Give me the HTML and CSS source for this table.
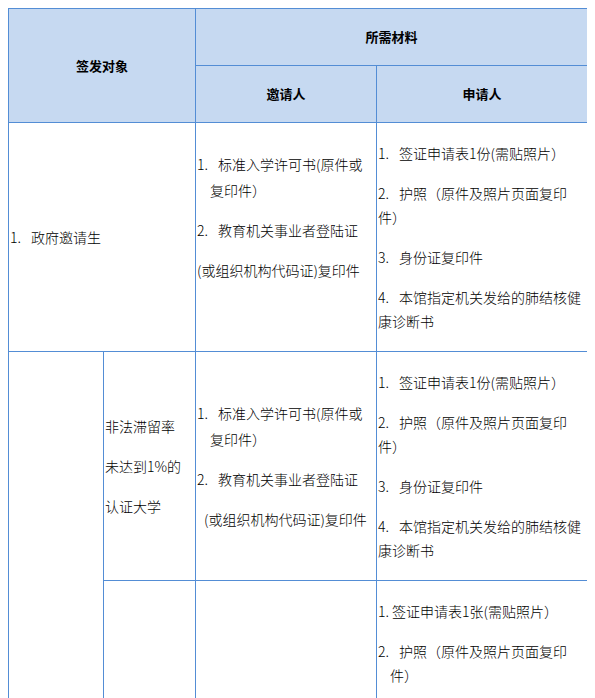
FILE: index.html
```html
<!DOCTYPE html>
<html lang="zh-CN">
<head>
<meta charset="utf-8">
<title>签发对象与所需材料</title>
<link rel="stylesheet" href="styles.css">
</head>
<body>
<table class="visa">
  <colgroup>
    <col class="c-a">
    <col class="c-b">
    <col class="c-c">
    <col class="c-d">
  </colgroup>
  <thead>
    <tr class="h1">
      <th colspan="2" rowspan="2">签发对象</th>
      <th colspan="2">所需材料</th>
    </tr>
    <tr class="h2">
      <th>邀请人</th>
      <th>申请人</th>
    </tr>
  </thead>
  <tbody>
    <tr class="r1">
      <td colspan="2"><span class="n">1.</span>政府邀请生</td>
      <td class="mid">
        <p class="hang"><span class="n">1.</span>标准入学许可书(原件或<br>复印件）</p>
        <p><span class="n">2.</span>教育机关事业者登陆证</p>
        <p>(或组织机构代码证)复印件</p>
        <p>&nbsp;</p>
      </td>
      <td class="app">
        <p><span class="n">1.</span>签证申请表1份(需贴照片）</p>
        <p><span class="n">2.</span>护照（原件及照片页面复印<br>件）</p>
        <p><span class="n">3.</span>身份证复印件</p>
        <p><span class="n">4.</span>本馆指定机关发给的肺结核健<br>康诊断书</p>
      </td>
    </tr>
    <tr class="r2">
      <td rowspan="2"></td>
      <td class="sub">
        <p>非法滞留率</p>
        <p>未达到1%的</p>
        <p>认证大学</p>
      </td>
      <td class="mid">
        <p class="hang"><span class="n">1.</span>标准入学许可书(原件或<br>复印件）</p>
        <p><span class="n">2.</span>教育机关事业者登陆证</p>
        <p class="ind">(或组织机构代码证)复印件</p>
      </td>
      <td class="app">
        <p><span class="n">1.</span>签证申请表1份(需贴照片）</p>
        <p><span class="n">2.</span>护照（原件及照片页面复印<br>件）</p>
        <p><span class="n">3.</span>身份证复印件</p>
        <p><span class="n">4.</span>本馆指定机关发给的肺结核健<br>康诊断书</p>
      </td>
    </tr>
    <tr class="r3">
      <td class="sub"></td>
      <td class="mid"></td>
      <td class="app top">
        <p><span class="n tight">1.</span>签证申请表1张(需贴照片）</p>
        <p class="hang"><span class="n">2.</span>护照（原件及照片页面复印<br>件）</p>
      </td>
    </tr>
  </tbody>
</table>
</body>
</html>
```

FILE: styles.css
```css
html, body {
  background: #ffffff;
}

body {
  margin: 8px;
  font-family: "Noto Sans CJK SC", "Liberation Sans", sans-serif;
  font-size: 14px;
  color: #000000;
}

.visa {
  border-collapse: collapse;
  table-layout: fixed;
  width: 579px;
}

.c-a { width: 95px; }
.c-b { width: 92px; }
.c-c { width: 181px; }
.c-d { width: 211px; }

.visa th,
.visa td {
  border: 1px solid #538dd5;
  padding: 0 1px;
  vertical-align: middle;
  text-align: left;
  line-height: 24px;
  font-weight: 300;
}

.visa th {
  background: #c6d9f1;
  text-align: center;
  font-weight: 700;
  font-size: 13px;
}

.h1 th { height: 56px; }
.h2 th { height: 56px; }

.r1 td,
.r2 td { height: 228px; }

.r3 td { height: 200px; }

.visa p {
  margin: 0;
}

.visa p + p {
  margin-top: 16px;
}

.mid p {
  line-height: 26px;
}

.mid p + p {
  margin-top: 14px;
}

.hang {
  padding-left: 13px;
  text-indent: -13px;
}

.ind {
  padding-left: 7px;
}

.n {
  display: inline-block;
  width: 21px;
  text-indent: 0;
}

.n.tight {
  width: 14px;
}

.app.top {
  vertical-align: top;
  padding-top: 18px;
}

.app.top .hang {
  padding-left: 12px;
  text-indent: -12px;
}
```
